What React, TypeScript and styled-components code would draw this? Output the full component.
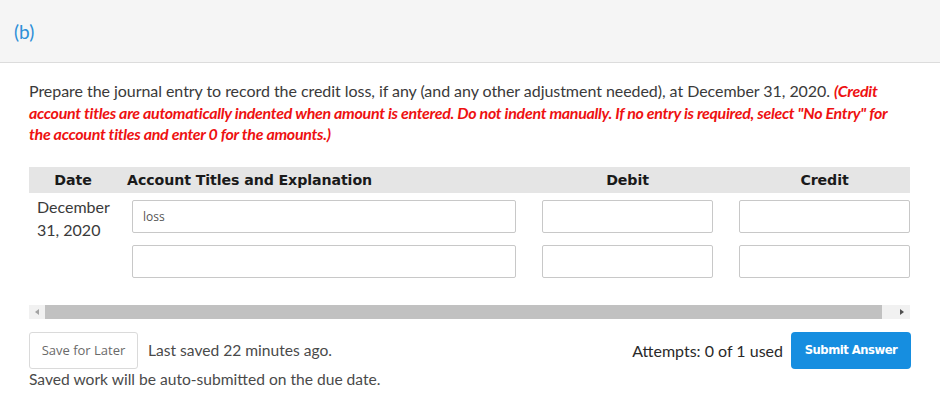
import React from "react";
import styled, { createGlobalStyle } from "styled-components";

const Global = createGlobalStyle`
  html, body { margin: 0; padding: 0; background: #fff; }
  body { font-family: Lato, "Noto Sans", sans-serif; color: #333; }
  * { box-sizing: border-box; }
`;

const Page = styled.div`
  width: 940px;
  height: 406px;
  overflow: hidden;
  background: #fff;
`;

const PartHeader = styled.div`
  height: 63px;
  background: #f5f5f5;
  border-bottom: 1px solid #dcdcdc;
  display: flex;
  align-items: center;
  padding-left: 14px;
  font-size: 19px;
  color: #2e8fd8;
`;

const Body = styled.div`
  padding: 17px 30px 0 29px;
`;

const Prompt = styled.p`
  margin: 0;
  font-size: 16px;
  line-height: 21.5px;
  color: #3a3a3a;
  letter-spacing: -0.05px;
`;

const Note = styled.em`
  color: #ee1111;
  font-weight: 700;
  font-style: italic;
  letter-spacing: -0.3px;
`;

const Grid = styled.div`
  display: grid;
  grid-template-columns: 77px 384px 171px 171px;
  column-gap: 26px;
`;

const HeadRow = styled(Grid)`
  margin-top: 22px;
  width: 881px;
  height: 26px;
  background: #e5e5e5;
  align-items: center;
  font-family: "DejaVu Sans", Verdana, sans-serif;
  font-weight: 700;
  font-size: 14.2px;
  letter-spacing: -0.1px;
  color: #1a1a1a;
`;

const HeadCell = styled.div<{ $left?: boolean; $shift?: number }>`
  text-align: ${(p) => (p.$left ? "left" : "center")};
  margin-left: ${(p) => p.$shift || 0}px;
  white-space: nowrap;
`;

const EntryRows = styled.div`
  display: flex;
  flex-direction: column;
  gap: 12px;
  margin-top: 7px;
`;

const EntryRow = styled(Grid)`
  align-items: start;
  height: 33px;
`;

const DateCell = styled.div`
  font-size: 16px;
  line-height: 23px;
  padding-left: 8px;
  margin-top: -5px;
  white-space: nowrap;
  color: #3a3a3a;
`;

const Field = styled.input`
  width: 100%;
  height: 33px;
  border: 1px solid #c8c8c8;
  border-radius: 2px;
  background: #fff;
  padding: 0 10px;
  font-family: "Open Sans", sans-serif;
  font-size: 12px;
  color: #555;
  outline: none;
`;

const Scroll = styled.div`
  margin-top: 27px;
  height: 14px;
  width: 881px;
  background: #f1f1f1;
  display: flex;
  align-items: center;
`;

const Arrow = styled.div<{ $dir: "left" | "right"; $dim?: boolean }>`
  width: 16px;
  height: 14px;
  display: flex;
  align-items: center;
  justify-content: center;
  &::before {
    content: "";
    width: 0;
    height: 0;
    border-top: 3.5px solid transparent;
    border-bottom: 3.5px solid transparent;
    ${(p) =>
      p.$dir === "left"
        ? `border-right: 4px solid ${p.$dim ? "#a3a3a3" : "#505050"};`
        : `border-left: 4px solid ${p.$dim ? "#a3a3a3" : "#505050"};`}
  }
`;

const Thumb = styled.div`
  flex: 1;
  height: 14px;
  background: #c1c1c1;
  margin-right: 12px;
`;

const Footer = styled.div`
  margin-top: 13px;
  display: flex;
  align-items: center;
  width: 882px;
`;

const SaveBtn = styled.button`
  height: 37px;
  width: 109px;
  background: #fff;
  border: 1px solid #dadada;
  border-radius: 3px;
  font-family: "Open Sans", sans-serif;
  font-size: 13px;
  color: #6a6a6a;
  padding: 0;
`;

const Status = styled.span`
  font-size: 15.6px;
  color: #4a4a4a;
  margin-left: 10px;
`;

const Spacer = styled.div`
  flex: 1;
`;

const Attempts = styled.span`
  font-size: 16px;
  color: #2a2a2a;
  margin-right: 8px;
`;

const SubmitBtn = styled.button`
  height: 37px;
  width: 120px;
  background: #168ee0;
  border: none;
  border-radius: 4px;
  color: #fff;
  font-family: "DejaVu Sans", Verdana, sans-serif;
  font-weight: 700;
  font-size: 11.6px;
  letter-spacing: -0.5px;
  padding: 0;
`;

const AutoNote = styled.div`
  font-size: 15.6px;
  color: #4a4a4a;
  margin-top: 1px;
`;

export default function App() {
  return (
    <Page>
      <Global />
      <PartHeader>(b)</PartHeader>
      <Body>
        <Prompt>
          Prepare the journal entry to record the credit loss, if any (and any
          other adjustment needed), at December 31, 2020.{" "}
          <Note>
            (Credit account titles are automatically indented when amount is
            entered. Do not indent manually. If no entry is required, select
            "No Entry" for the account titles and enter 0 for the amounts.)
          </Note>
        </Prompt>
        <HeadRow>
          <HeadCell $shift={11}>Date</HeadCell>
          <HeadCell $left $shift={-5}>
            Account Titles and Explanation
          </HeadCell>
          <HeadCell>Debit</HeadCell>
          <HeadCell>Credit</HeadCell>
        </HeadRow>
        <EntryRows>
          <EntryRow>
            <DateCell>
              December
              <br />
              31, 2020
            </DateCell>
            <Field defaultValue="loss" />
            <Field />
            <Field />
          </EntryRow>
          <EntryRow>
            <div />
            <Field />
            <Field />
            <Field />
          </EntryRow>
        </EntryRows>
        <Scroll>
          <Arrow $dir="left" $dim />
          <Thumb />
          <Arrow $dir="right" />
        </Scroll>
        <Footer>
          <SaveBtn>Save for Later</SaveBtn>
          <Status>Last saved 22 minutes ago.</Status>
          <Spacer />
          <Attempts>Attempts: 0 of 1 used</Attempts>
          <SubmitBtn>Submit Answer</SubmitBtn>
        </Footer>
        <AutoNote>Saved work will be auto-submitted on the due date.</AutoNote>
      </Body>
    </Page>
  );
}
